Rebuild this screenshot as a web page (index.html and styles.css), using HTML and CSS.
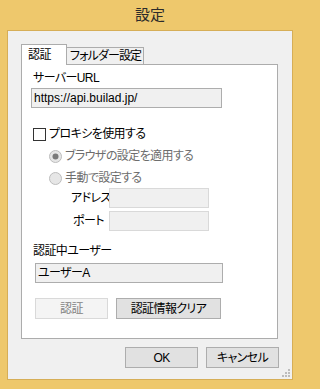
FILE: index.html
```html
<!DOCTYPE html>
<html lang="ja">
<head>
<meta charset="utf-8">
<title>設定</title>
<link rel="stylesheet" href="styles.css">
</head>
<body>
<div class="window">
  <div class="titlebar">設定</div>
  <div class="client">
    <div class="tabs">
      <div class="tab active">認証</div>
      <div class="tab">フォルダー設定</div>
    </div>
    <div class="panel">
      <div class="label lbl-url">サーバーURL</div>
      <div class="textbox tb-url">https://api.builad.jp/</div>
      <div class="check-row">
        <span class="checkbox"></span>
        <span class="check-label">プロキシを使用する</span>
      </div>
      <div class="radio-row first">
        <svg class="radio" width="13" height="13" viewBox="0 0 13 13"><circle cx="6.5" cy="6.5" r="6" fill="#e6e6e6" stroke="#bcbcbc"/><circle cx="6.5" cy="6.5" r="3" fill="#7a7a7a"/></svg>
        <span class="disabled-text">ブラウザの設定を適用する</span>
      </div>
      <div class="radio-row">
        <svg class="radio" width="13" height="13" viewBox="0 0 13 13"><circle cx="6.5" cy="6.5" r="6" fill="#e6e6e6" stroke="#bcbcbc"/></svg>
        <span class="disabled-text">手動で設定する</span>
      </div>
      <div class="field-row first">
        <span class="field-label">アドレス</span>
        <span class="textbox disabled small"></span>
      </div>
      <div class="field-row second">
        <span class="field-label port">ポート</span>
        <span class="textbox disabled small"></span>
      </div>
      <div class="label lbl-user">認証中ユーザー</div>
      <div class="textbox tb-user">ユーザーA</div>
      <div class="btn-row">
        <span class="button disabled-btn">認証</span>
        <span class="button wide">認証情報クリア</span>
      </div>
    </div>
    <div class="footer">
      <span class="button dlg">OK</span>
      <span class="button dlg">キャンセル</span>
    </div>
    <svg class="grip" width="8" height="8" viewBox="0 0 8 8">
      <rect x="6" y="0" width="2" height="2" fill="#bcbcbc"/>
      <rect x="3" y="3" width="2" height="2" fill="#bcbcbc"/>
      <rect x="6" y="3" width="2" height="2" fill="#bcbcbc"/>
      <rect x="0" y="6" width="2" height="2" fill="#bcbcbc"/>
      <rect x="3" y="6" width="2" height="2" fill="#bcbcbc"/>
      <rect x="6" y="6" width="2" height="2" fill="#bcbcbc"/>
    </svg>
  </div>
</div>
</body>
</html>
```

FILE: styles.css
```css
* { box-sizing: border-box; }
html, body { margin: 0; padding: 0; background: #eec86c; }
body {
  font-family: "Liberation Sans", "Noto Sans CJK JP", sans-serif;
  font-size: 12px;
  line-height: 16px;
  color: #000;
  font-feature-settings: "palt";
  letter-spacing: -0.6px;
  white-space: nowrap;
  width: 300px;
  height: 389px;
  overflow: hidden;
}
.window {
  width: 300px;
  height: 389px;
  background: #eec86c;
  padding: 0 7px 9px 7px;
  display: flex;
  flex-direction: column;
}
.titlebar {
  height: 30px;
  display: flex;
  align-items: center;
  justify-content: center;
  font-size: 15px;
  letter-spacing: 0;
  color: #2b2b2b;
  padding-bottom: 1px;
}
.client {
  flex: 1;
  border: 1px solid #d6ae57;
  background: #f0f0f0;
  position: relative;
  padding: 13px 0 0 13px;
}
.tabs {
  display: flex;
  align-items: flex-end;
  height: 20px;
  position: relative;
  z-index: 1;
}
.tab {
  height: 17px;
  border: 1px solid #acacac;
  border-bottom: none;
  background: #f0f0f0;
  padding: 0 0 0 3px;
  line-height: 16px;
  width: 78px;
  margin-left: -1px;
  letter-spacing: -0.9px;
  overflow: hidden;
}
.tab.active {
  height: 21px;
  width: 46px;
  margin-left: 0;
  background: #fff;
  padding: 2px 0 0 6px;
  margin-bottom: -1px;
  letter-spacing: -0.6px;
  position: relative;
  z-index: 2;
}
.panel {
  width: 257px;
  height: 275px;
  border: 1px solid #acacac;
  background: #fff;
  display: flex;
  flex-direction: column;
  align-items: flex-start;
}
.label { margin-left: 11px; }
.lbl-url { margin-top: 5px; }
.textbox {
  display: block;
  height: 20px;
  border: 1px solid #adadad;
  background: #f0f0f0;
  padding: 1px 2px;
  line-height: 16px;
}
.tb-url { margin-top: 2px; margin-left: 9px; width: 191px; letter-spacing: 0; }
.check-row {
  margin-top: 18px;
  margin-left: 11px;
  display: flex;
  align-items: center;
  height: 16px;
}
.checkbox {
  width: 13px;
  height: 13px;
  border: 1px solid #333;
  background: #fff;
  margin-right: 3px;
}
.radio-row {
  display: flex;
  align-items: center;
  height: 16px;
  margin-left: 27px;
  margin-top: 6px;
}
.radio { margin-right: 3px; }
.disabled-text { color: #6d6d6d; }
.field-row {
  display: flex;
  align-items: center;
  margin-left: 49px;
  height: 20px;
}
.field-row.first { margin-top: 2px; }
.field-row.second { margin-top: 3px; }
.field-label { width: 38px; }
.field-label.port { padding-left: 2px; }
.textbox.disabled { border-color: #d9d9d9; }
.textbox.small { width: 100px; }
.lbl-user { margin-top: 12px; }
.tb-user { margin-top: 4px; margin-left: 13px; width: 188px; }
.btn-row {
  display: flex;
  gap: 8px;
  margin-top: 15px;
  margin-left: 13px;
}
.button {
  display: flex;
  align-items: center;
  justify-content: center;
  height: 21px;
  border: 1px solid #adadad;
  background: #e1e1e1;
  line-height: 16px;
}
.disabled-btn {
  width: 73px;
  background: #f4f4f4;
  border-color: #d9d9d9;
  color: #838383;
}
.wide { width: 105px; }
.footer {
  display: flex;
  gap: 8px;
  margin-top: 8px;
  margin-left: 104px;
}
.dlg { width: 73px; }
.grip {
  position: absolute;
  right: 2px;
  bottom: 2px;
}
```
